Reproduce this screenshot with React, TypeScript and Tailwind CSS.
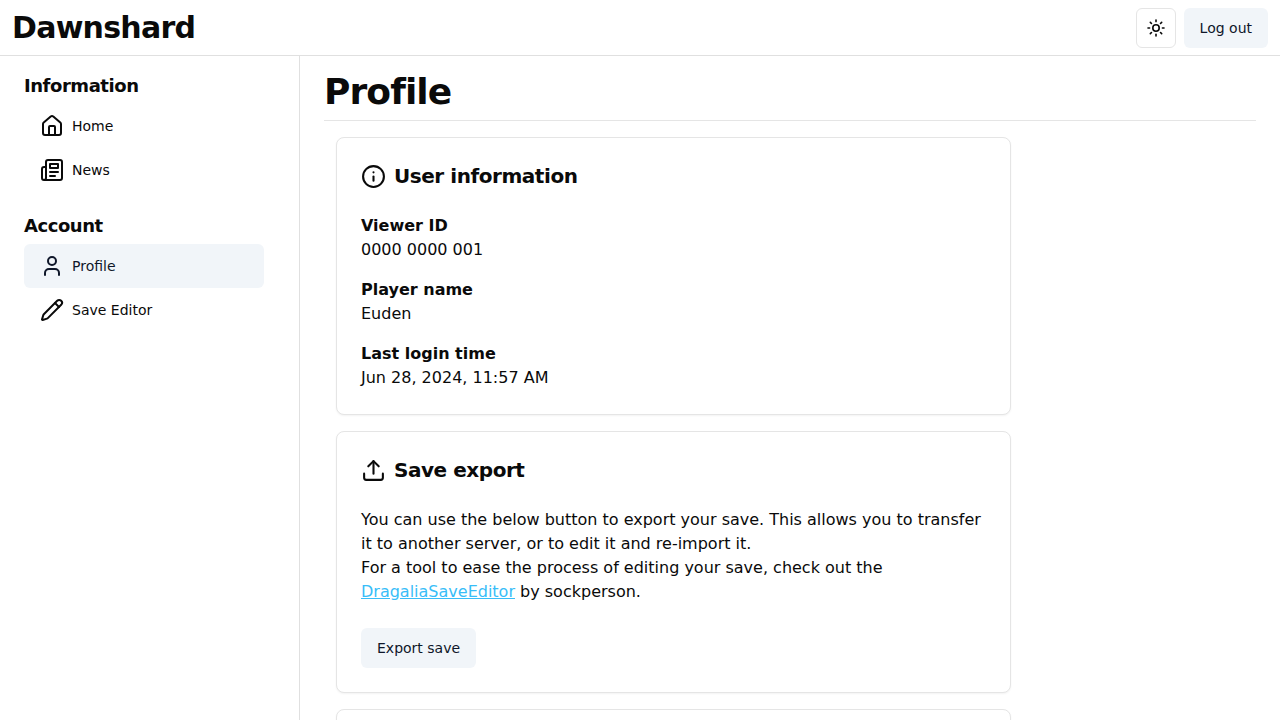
import type { ReactNode } from "react";
import { House, Info, Pencil, Sun, Upload, User } from "lucide-react";

function NewspaperIcon() {
  return (
    <svg className="size-6" viewBox="0 0 24 24" fill="none" stroke="currentColor" strokeWidth="2" strokeLinecap="round" strokeLinejoin="round">
      <path d="M4 22h16a2 2 0 0 0 2-2V4a2 2 0 0 0-2-2H8a2 2 0 0 0-2 2v16a2 2 0 0 1-2 2Zm0 0a2 2 0 0 1-2-2v-9c0-1.1.9-2 2-2h2" />
      <path d="M18 14h-8" />
      <path d="M15 18h-5" />
      <path d="M10 6h8v4h-8V6Z" />
    </svg>
  );
}

function NavItem({ icon, label, active = false }: { icon: ReactNode; label: string; active?: boolean }) {
  return (
    <a
      href="#"
      className={`flex h-11 w-60 items-center gap-2 rounded-md px-4 text-sm font-medium ${active ? "bg-[#f1f5f9] text-[#0f172a]" : ""}`}
    >
      {icon}
      {label}
    </a>
  );
}

function Card({ children }: { children?: ReactNode }) {
  return (
    <section className="min-h-40 w-[675px] shrink-0 rounded-lg border border-[#e5e5e5] bg-white p-6 shadow-xs">
      {children}
    </section>
  );
}

function CardTitle({ icon, children }: { icon: ReactNode; children: ReactNode }) {
  return (
    <h2 className="flex h-7 items-center gap-2 text-xl font-semibold tracking-[-0.45px]">
      {icon}
      {children}
    </h2>
  );
}

function Field({ label, value }: { label: string; value: string }) {
  return (
    <div>
      <dt className="font-semibold">{label}</dt>
      <dd>{value}</dd>
    </div>
  );
}

export default function App() {
  return (
    <div className="flex h-screen flex-col overflow-hidden bg-white font-['DejaVu_Sans',sans-serif] text-[#0a0a0a]">
      <header className="flex h-14 shrink-0 items-center justify-between border-b border-[#e0e0e0] px-3">
        <h1 className="text-3xl font-bold tracking-tight">Dawnshard</h1>
        <div className="flex gap-2">
          <button aria-label="Toggle theme" className="flex size-10 items-center justify-center rounded-md border border-[#e5e5e5]">
            <Sun className="size-5" viewBox="-0.5 -0.5 25 25" />
          </button>
          <button className="h-10 rounded-md bg-[#f1f5f9] px-4 text-sm font-medium text-[#0f172a]">Log out</button>
        </div>
      </header>
      <div className="flex min-h-0 flex-1">
        <nav className="flex w-[300px] shrink-0 flex-col gap-5 border-r border-[#e0e0e0] px-6 pt-4">
          <div>
            <h2 className="mb-1 text-lg font-semibold tracking-tight">Information</h2>
            <NavItem icon={<House className="size-6" />} label="Home" />
            <NavItem icon={<NewspaperIcon />} label="News" />
          </div>
          <div>
            <h2 className="mb-1 text-lg font-semibold tracking-tight">Account</h2>
            <NavItem icon={<User className="size-6" />} label="Profile" active />
            <NavItem icon={<Pencil className="size-6" />} label="Save Editor" />
          </div>
        </nav>
        <main className="min-w-0 flex-1 overflow-hidden px-6 pt-4">
          <h1 className="border-b border-[#e5e5e5] pb-2 text-4xl font-bold tracking-tight">Profile</h1>
          <div className="flex flex-col gap-4 px-3 pt-4">
            <Card>
              <CardTitle icon={<Info className="size-[25px]" />}>User information</CardTitle>
              <dl className="flex flex-col gap-4 pt-6">
                <Field label="Viewer ID" value="0000 0000 001" />
                <Field label="Player name" value="Euden" />
                <Field label="Last login time" value="Jun 28, 2024, 11:57 AM" />
              </dl>
            </Card>
            <Card>
              <CardTitle icon={<Upload className="size-[25px]" />}>Save export</CardTitle>
              <p className="pt-6">
                You can use the below button to export your save. This allows you to transfer it to another server, or to edit it and re-import it.
                <br />
                For a tool to ease the process of editing your save, check out the{" "}
                <a href="#" className="text-[#38bdf8] underline">DragaliaSaveEditor</a> by sockperson.
              </p>
              <button className="mt-6 h-10 rounded-md bg-[#f1f5f9] px-4 text-sm font-medium text-[#0f172a]">Export save</button>
            </Card>
            <Card />
          </div>
        </main>
      </div>
    </div>
  );
}
